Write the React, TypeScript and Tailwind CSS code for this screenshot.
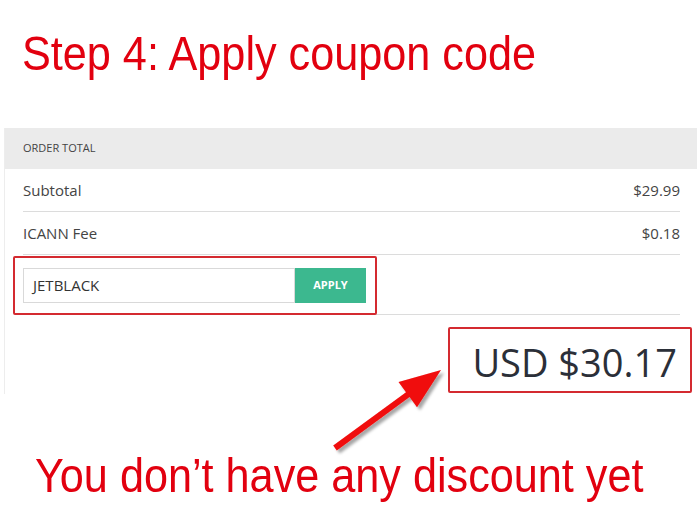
export default function App() {
  const rows = [
    { label: "Subtotal", value: "$29.99" },
    { label: "ICANN Fee", value: "$0.18" },
  ];

  return (
    <div className="relative h-[513px] w-[700px] overflow-hidden bg-white">
      <h1 className="ml-[22px] mt-[30px] origin-left scale-x-[0.9] whitespace-nowrap font-['Liberation_Sans',Arial,sans-serif] text-[48px] font-normal leading-none text-[#e2000f]">
        Step 4: Apply coupon code
      </h1>

      <div className="ml-[4px] mt-[50px] w-[693px] border-l border-[#ededed] font-['Open_Sans',sans-serif]">
        <div className="flex h-[41px] items-center bg-[#ebebeb] px-[18px] text-[11px] uppercase text-[#444]">
          Order Total
        </div>

        <div className="pl-[18px] pr-[17px]">
          {rows.map((r) => (
            <div
              key={r.label}
              className="flex h-[43px] items-center justify-between border-b border-[#dcdcdc] pt-[1px] text-[15px] text-[#444]"
            >
              <span>{r.label}</span>
              <span>{r.value}</span>
            </div>
          ))}

          <div className="flex h-[60px] items-start border-b border-[#dcdcdc]">
            <div className="relative z-10 -ml-[10px] mt-[1px] flex h-[59px] w-[364px] items-center rounded-[2px] border-2 border-[#d42a30] pl-[8px]">
              <div className="flex h-[35px] w-[272px] items-center border border-[#d9d9d9] pl-[9px] text-[15px] text-[#333]">
                JETBLACK
              </div>
              <button className="flex h-[35px] w-[71px] items-center justify-center bg-[#3cb88f] text-[11px] font-bold text-white">
                APPLY
              </button>
            </div>
          </div>
        </div>

        <div className="flex justify-end pb-[1px] pr-[5px] pt-[12px]">
          <div className="flex h-[66px] w-[244px] items-center justify-end rounded-[2px] border-2 border-[#d42a30] pr-[13px] pt-[4px] text-[38px] font-medium leading-none text-[#2b2f38]">
            USD $30.17
          </div>
        </div>
      </div>

      <p className="ml-[35px] mt-[58px] origin-left scale-x-[0.9] whitespace-nowrap font-['Liberation_Sans',Arial,sans-serif] text-[48px] leading-none text-[#e2000f]">
        You don’t have any discount yet
      </p>

      <svg
        className="pointer-events-none absolute left-0 top-0"
        width="700"
        height="513"
        viewBox="0 0 700 513"
      >
        <defs>
          <filter id="sh" x="-20%" y="-20%" width="140%" height="140%">
            <feDropShadow dx="3" dy="3" stdDeviation="1.5" floodColor="#000" floodOpacity="0.35" />
          </filter>
        </defs>
        <polygon
          points="333.2,445.6 406,392.2 398.5,382 441,370 417,407.2 409.6,397 336.8,450.4"
          fill="#f00a0a"
          filter="url(#sh)"
        />
      </svg>
    </div>
  );
}
